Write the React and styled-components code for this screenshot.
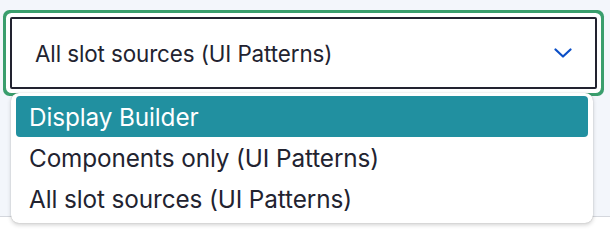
import React, { useState } from 'react';
import styled, { createGlobalStyle } from 'styled-components';

const GlobalStyle = createGlobalStyle`
  html, body {
    margin: 0;
    padding: 0;
    background: #ffffff;
    font-family: 'Inter', 'Noto Sans', sans-serif;
  }
`;

const Page = styled.div`
  min-height: 243px;
  background: #ffffff;
`;

const Panel = styled.div`
  background: #f3f6fb;
  border-bottom: 1px solid #d4d7dd;
  height: 217px;
  padding: 17px 13px 0 10px;
  box-sizing: border-box;
`;

const Field = styled.div`
  position: relative;
`;

const SelectBox = styled.div`
  display: flex;
  align-items: center;
  justify-content: space-between;
  height: 72px;
  box-sizing: border-box;
  padding: 0 23px 0 23px;
  background: #ffffff;
  border: 2px solid #222330;
  border-radius: 2px;
  box-shadow: 0 0 0 4px #ffffff, 0 0 0 7px #3a9e6d;
  color: #222330;
  font-size: 22.4px;
  letter-spacing: -0.1px;
  cursor: pointer;
`;

const Chevron = styled.svg`
  width: 18px;
  height: 10px;
  color: #0b4fc7;
`;

const Menu = styled.ul`
  position: absolute;
  top: 76px;
  left: 1px;
  right: 4px;
  margin: 0;
  padding: 3px 5px 4px;
  list-style: none;
  background: #ffffff;
  border-radius: 8px;
  box-shadow: 0 2px 4px rgba(0, 0, 0, 0.18), 0 0 1px rgba(0, 0, 0, 0.3);
  z-index: 2;
`;

const Option = styled.li`
  height: 41px;
  display: flex;
  align-items: center;
  padding: 0 13px;
  border-radius: 4px;
  font-size: 24.3px;
  letter-spacing: -0.1px;
  color: ${(p) => (p.$active ? '#ffffff' : '#222330')};
  background: ${(p) => (p.$active ? '#2190a0' : 'transparent')};
  cursor: pointer;
`;

const options = [
  'Display Builder',
  'Components only (UI Patterns)',
  'All slot sources (UI Patterns)',
];

export default function App() {
  const [active] = useState(0);

  return (
    <Page>
      <GlobalStyle />
      <Panel>
        <Field>
          <SelectBox>
            <span>All slot sources (UI Patterns)</span>
            <Chevron viewBox="0 0 18 10" fill="none">
              <path d="M1.5 1.5 L9 8.5 L16.5 1.5" stroke="currentColor" strokeWidth="2.2" strokeLinecap="round" strokeLinejoin="round" />
            </Chevron>
          </SelectBox>
          <Menu>
            {options.map((label, i) => (
              <Option key={label} $active={i === active}>
                {label}
              </Option>
            ))}
          </Menu>
        </Field>
      </Panel>
    </Page>
  );
}
